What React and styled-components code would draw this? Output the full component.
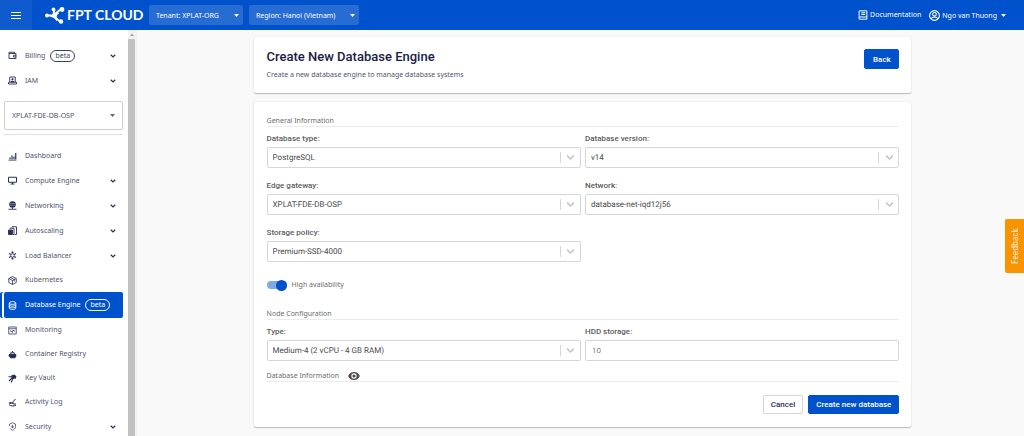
import styled, { createGlobalStyle } from "styled-components";

const GlobalStyle = createGlobalStyle`
  * {
    box-sizing: border-box;
  }
  body {
    margin: 0;
    background-color: #f9f9f9;
    color: #50556f;
    font-family: "Noto Sans", sans-serif;
    font-size: 7px;
    line-height: 12px;
  }
  button,
  input,
  select {
    margin: 0;
    font-family: inherit;
    font-size: inherit;
    color: inherit;
  }
  svg {
    flex-shrink: 0;
  }
`;

const Page = styled.div`
  display: flex;
  flex-direction: column;
  height: 100vh;
  overflow: hidden;
`;

/* top bar */

const TopBar = styled.header`
  display: flex;
  align-items: center;
  flex-shrink: 0;
  height: 30px;
  padding-right: 18px;
  background-color: #0052cc;
  color: #fff;
`;
const MenuButton = styled.button`
  display: flex;
  align-items: center;
  justify-content: center;
  width: 32px;
  height: 30px;
  padding: 0;
  border: 0;
  background-color: #0f5bce;
  color: #fff;
`;
const Logo = styled.a`
  display: flex;
  align-items: center;
  gap: 2px;
  width: 104px;
  margin-left: 13px;
  font-family: Lato, sans-serif;
  font-size: 14px;
  font-weight: 700;
  line-height: 20px;
  color: #fff;
  text-decoration: none;
  white-space: nowrap;
`;
const TopSelectWrap = styled.div`
  display: grid;
  align-items: center;
  margin-right: 6px;
  svg {
    grid-area: 1 / 1;
    justify-self: end;
    margin-right: 4px;
    pointer-events: none;
  }
`;
const TopSelect = styled.select`
  grid-area: 1 / 1;
  width: ${(props) => props.$width};
  height: 20px;
  padding: 0 12px 0 7px;
  border: 0;
  border-radius: 2px;
  background-color: #266cd3;
  color: #fff;
  appearance: none;
`;
const TopLinks = styled.nav`
  display: flex;
  align-items: center;
  gap: 8px;
  margin-left: auto;
`;
const TopLink = styled.a`
  display: flex;
  align-items: center;
  gap: 2px;
  color: #fff;
  text-decoration: none;
  white-space: nowrap;
`;
const UserButton = styled(TopLink).attrs({ as: "button" })`
  padding: 0;
  border: 0;
  background: none;
  svg:last-child {
    margin-left: 2px;
  }
`;

/* sidebar */

const Body = styled.div`
  display: flex;
  flex: 1;
  min-height: 0;
`;
const Sidebar = styled.aside`
  flex: 0 0 128px;
  padding: 13px 5px 0 4px;
  background-color: #fff;
  overflow: hidden;
`;
const NavList = styled.ul`
  margin: 0;
  padding: 0;
  list-style: none;
`;
const NavLink = styled.a`
  display: flex;
  align-items: center;
  height: ${(props) => (props.$expandable ? "25px" : "24px")};
  padding: 0 7px 0 4px;
  color: inherit;
  text-decoration: none;
  white-space: nowrap;
  > svg {
    color: #2b2f55;
  }
  > svg:first-child {
    margin-right: 8px;
  }
  &[aria-current] {
    height: 26px;
    border-radius: 2px;
    background-color: #0052cc;
    color: #fff;
    box-shadow: -2px 0 0 #fff, -4px 0 0 #0052cc;
  }
  &[aria-current] > svg {
    color: #fff;
  }
`;
const ExpandMark = styled.span`
  display: flex;
  margin-left: auto;
  color: #2b2f55;
`;
const Beta = styled.span`
  margin-left: 5px;
  padding: 0 4px;
  border: 1px solid currentColor;
  border-radius: 7px;
  line-height: 10px;
  color: ${(props) => (props.$light ? "#fff" : "#3b3f63")};
`;
const ProjectWrap = styled.div`
  display: grid;
  align-items: center;
  margin: 8px 0 9px;
  padding-bottom: 4px;
  border-bottom: 1px solid #e0e0e0;
  svg {
    grid-area: 1 / 1;
    justify-self: end;
    margin-right: 8px;
    color: #666;
    pointer-events: none;
  }
`;
const ProjectSelect = styled.select`
  grid-area: 1 / 1;
  width: 100%;
  height: 29px;
  padding: 0 16px 0 7px;
  border: 1px solid #cfcfcf;
  border-radius: 2px;
  background-color: #fff;
  appearance: none;
`;
const ScrollTrack = styled.div`
  display: flex;
  flex-direction: column;
  align-items: center;
  flex: 0 0 9px;
  padding-right: 2px;
  background-color: #f1f1f1;
  color: #a3a3a3;
`;
const ScrollArrow = styled.div`
  display: flex;
  align-items: center;
  height: 9px;
`;
const ScrollThumb = styled.div`
  flex: 1;
  width: 7px;
  background-color: #c1c1c1;
`;

/* content */

const Main = styled.main`
  display: flex;
  flex: 1;
  flex-direction: column;
  align-items: center;
  gap: 9px;
  min-width: 0;
  padding: 7px 0 9px 4px;
`;
const Card = styled.section`
  width: 74.5%;
  padding: 12px 12px 13px 13px;
  border-radius: 2px;
  background-color: #fff;
  box-shadow: 0 1px 1px rgba(0, 0, 0, 0.24), 0 0 2px rgba(0, 0, 0, 0.1);
`;
const HeadCard = styled(Card)`
  display: flex;
  align-items: flex-start;
  justify-content: space-between;
  padding-bottom: 12px;
`;
const Title = styled.h1`
  margin: 0 0 4px;
  font-family: Roboto, sans-serif;
  font-size: 13px;
  font-weight: 500;
  line-height: 16px;
  color: #172046;
`;
const Subtitle = styled.p`
  margin: 0;
`;
const Button = styled.button`
  min-width: 35px;
  height: ${(props) => (props.$tall ? "20px" : "19px")};
  padding: 0 7px;
  border: 1px solid ${(props) => (props.$primary ? "#0052cc" : "#d4d4d8")};
  border-radius: 2px;
  background-color: ${(props) => (props.$primary ? "#0052cc" : "#fff")};
  color: ${(props) => (props.$primary ? "#fff" : "#2b3056")};
  font-family: Roboto, sans-serif;
  font-size: 8px;
  font-weight: 500;
`;
const SectionTitle = styled.h2`
  display: flex;
  align-items: center;
  gap: 6px;
  height: 13px;
  margin: 0 0 6px;
  padding-top: 1px;
  border-bottom: 1px solid #ececec;
  font-size: 7px;
  font-weight: 400;
  color: #6c6c6c;
`;
const FieldGrid = styled.div`
  display: grid;
  grid-template-columns: 1fr 1fr;
  gap: 12px 4px;
`;
const Field = styled.div`
  display: flex;
  flex-direction: column;
  gap: 2px;
  font-family: Roboto, sans-serif;
  font-size: 8px;
  color: #4a4a4a;
`;
const Label = styled.label`
  font-weight: 500;
  color: #5c5c5c;
`;
const SelectBox = styled.div`
  display: grid;
  align-items: center;
`;
const Select = styled.select`
  grid-area: 1 / 1;
  width: 100%;
  height: 21px;
  padding: 0 24px 0 5px;
  border: 1px solid #d6d6d6;
  border-radius: 2px;
  background-color: #fff;
  text-rendering: geometricPrecision;
  appearance: none;
`;
const Indicator = styled.span`
  grid-area: 1 / 1;
  justify-self: end;
  display: flex;
  align-items: center;
  justify-content: center;
  width: 21px;
  height: 11px;
  border-left: 1px solid #d6d6d6;
  color: #c4c4c4;
  pointer-events: none;
`;
const Input = styled.input`
  height: 21px;
  padding: 0 6px;
  border: 1px solid #d6d6d6;
  border-radius: 2px;
  background-color: #fff;
  color: #808080;
`;
const SwitchRow = styled.label`
  display: flex;
  align-items: center;
  gap: 5px;
  margin: 17px 0 16px;
  color: #6c6c6c;
`;
const Switch = styled.input`
  display: flex;
  align-items: center;
  justify-content: flex-end;
  width: 20px;
  height: 8px;
  border-radius: 4px;
  background-color: #80a9e6;
  appearance: none;
  &::before {
    content: "";
    width: 11px;
    height: 11px;
    flex-shrink: 0;
    border-radius: 50%;
    background-color: #0052cc;
  }
  &:not(:checked) {
    justify-content: flex-start;
  }
`;
const LastSectionTitle = styled(SectionTitle)`
  gap: 9px;
  margin: 8px 0 13px;
`;
const IconButton = styled.button`
  display: flex;
  padding: 0;
  border: 0;
  background: none;
  color: #4a4a4a;
`;
const Actions = styled.div`
  display: flex;
  justify-content: flex-end;
  gap: 5px;
`;
const Feedback = styled.button`
  position: fixed;
  top: 219px;
  right: 0;
  width: 19px;
  height: 54px;
  padding: 0;
  border: 0;
  border-radius: 0 2px 2px 0;
  background-color: #f79400;
  color: #fff;
  font-size: 8px;
  writing-mode: vertical-rl;
  transform: rotate(180deg);
`;

/* icons */

const Icon = ({ children, size = 9, box = 18 }) => (
  <svg
    width={size}
    height={size}
    viewBox={`0 0 ${box} ${box}`}
    fill="none"
    stroke="currentColor"
    strokeWidth="1.8"
    aria-hidden="true"
  >
    {children}
  </svg>
);

const Caret = () => (
  <svg width="5" height="3" viewBox="0 0 10 6" aria-hidden="true">
    <path d="M0 0h10L5 6z" fill="currentColor" />
  </svg>
);

const Chevron = ({ size = 6, stroke = 2.4 }) => (
  <svg width={size} height={size} viewBox="0 0 12 12" fill="none" aria-hidden="true">
    <path d="M1.500 3.500 6 8l4.500-4.500" stroke="currentColor" strokeWidth={stroke} />
  </svg>
);

const icons = {
  billing: (
    <>
      <path d="M2 5v10h14V5zM2 5V2.500h11V5" />
      <path d="M16 8.500h-5v3.500h5" />
    </>
  ),
  iam: (
    <>
      <path d="M3.500 12V2h11v10M1 12.500h16V16H1z" />
      <circle cx="9" cy="6.500" r="2.200" fill="currentColor" stroke="none" />
      <path d="M5 12.500c0-4 8-4 8 0z" fill="currentColor" stroke="none" />
    </>
  ),
  dashboard: (
    <>
      <path d="M1 16.500h16" strokeWidth="1.400" />
      <path d="M4 15v-4M8 15V7M12 15V9M15.500 15V2" strokeWidth="2.400" />
    </>
  ),
  compute: <path d="M1 2.500h16v10H1zM9 12.500V16M5 16h8" strokeWidth="2" />,
  networking: (
    <>
      <circle cx="9" cy="7" r="6.500" fill="currentColor" stroke="none" />
      <path d="M4 5h10M4 8.500h10" stroke="#fff" strokeWidth="0.700" />
      <path d="M9 13v3M1 16.500h16" />
    </>
  ),
  autoscaling: (
    <>
      <path d="M1 8h8v9H1z" fill="currentColor" />
      <path d="M4 6V4.500h8V17H10M8 3V1.500h9V17h-4" />
    </>
  ),
  balancer: (
    <>
      <circle cx="9" cy="9" r="3.500" />
      <path d="M9 1v4M9 13v4M2 5l3.500 2M12.500 11 16 13M2 13l3.500-2M12.500 7 16 5" strokeWidth="2.200" />
      <path d="M6 2.500h6M6 15.500h6" strokeWidth="1.200" />
    </>
  ),
  kubernetes: (
    <path d="M9 1 16.500 5v8L9 17l-7.500-4V5zM1.500 5 9 9l7.500-4M9 9v8M5 3l7.500 4v4" strokeWidth="1.600" />
  ),
  database: (
    <>
      <ellipse cx="9" cy="4" rx="6.500" ry="2.800" />
      <path d="M2.500 4v10c0 4 13 4 13 0V4M2.500 7.500c0 3.500 13 3.500 13 0M2.500 11c0 3.500 13 3.500 13 0" />
    </>
  ),
  monitoring: <path d="M1.500 2h15v14h-15zM1.500 5.500h15M4 10h3l1.500 3 2-5 1.500 2H14" strokeWidth="1.500" />,
  registry: (
    <>
      <path d="M2 8h14l1 4-3 4.500H5L1 12z" fill="currentColor" stroke="none" />
      <path d="M5.500 8V5.500h7V8M9 5V2" strokeWidth="2" />
    </>
  ),
  vault: (
    <>
      <path d="M7 2.500 13 1l4 4-2 5-3-1-4 1-1-3z" fill="currentColor" stroke="none" />
      <path d="M9 7 2 14M11 8l-5 9M1 5.500h7" strokeWidth="2.200" />
    </>
  ),
  activity: (
    <>
      <path d="M15 2 10 7.500V12h6M10 10H1.500M2 13.500c3 3 10 3 14 1" strokeWidth="2" />
      <circle cx="5" cy="10" r="2" fill="currentColor" stroke="none" />
    </>
  ),
  security: (
    <>
      <path d="M3 8V4l6-2.500L15 4v5c0 4-3 6.500-6 7.500-2-1-4-2-5-4" strokeWidth="1.400" />
      <path d="M9 5.500v4M7 9.500h4L9 12z" strokeWidth="1.400" />
    </>
  ),
};

const LogoMark = () => (
  <svg width="20" height="17" viewBox="0 0 40 34" fill="#fff" stroke="#fff" aria-hidden="true">
    <path d="M4 17h12L31 5M16 17l14 12M16 17 19 6" fill="none" strokeWidth="3.600" />
    <path d="M11 17c6 0 10-4 13-8l4 4c-5 3-7 7-1 12l-4 3c-4-7-8-8-12-8z" stroke="none" />
    <circle cx="4" cy="17" r="4" stroke="none" />
    <circle cx="17" cy="5" r="3.800" stroke="none" />
    <circle cx="34" cy="5" r="4.800" stroke="none" />
    <circle cx="32" cy="29" r="4.500" stroke="none" />
    <circle cx="20" cy="17" r="3.500" stroke="none" />
  </svg>
);

const accountItems = [
  { icon: "billing", label: "Billing", beta: true, expandable: true },
  { icon: "iam", label: "IAM", expandable: true },
];

const serviceItems = [
  { icon: "dashboard", label: "Dashboard" },
  { icon: "compute", label: "Compute Engine", expandable: true },
  { icon: "networking", label: "Networking", expandable: true },
  { icon: "autoscaling", label: "Autoscaling", expandable: true },
  { icon: "balancer", label: "Load Balancer", expandable: true },
  { icon: "kubernetes", label: "Kubernetes" },
  { icon: "database", label: "Database Engine", beta: true, active: true },
  { icon: "monitoring", label: "Monitoring" },
  { icon: "registry", label: "Container Registry" },
  { icon: "vault", label: "Key Vault" },
  { icon: "activity", label: "Activity Log" },
  { icon: "security", label: "Security", expandable: true },
];

const NavItems = ({ items }) => (
  <NavList>
    {items.map((item) => (
      <li key={item.label}>
        <NavLink
          href="#"
          $expandable={item.expandable}
          aria-current={item.active ? "page" : undefined}
        >
          <Icon>{icons[item.icon]}</Icon>
          {item.label}
          {item.beta && <Beta $light={item.active}>beta</Beta>}
          {item.expandable && (
            <ExpandMark>
              <Chevron />
            </ExpandMark>
          )}
        </NavLink>
      </li>
    ))}
  </NavList>
);

const SelectField = ({ id, label, value }) => (
  <Field>
    <Label htmlFor={id}>{label}</Label>
    <SelectBox>
      <Select id={id}>
        <option>{value}</option>
      </Select>
      <Indicator>
        <Chevron size={9} stroke={2} />
      </Indicator>
    </SelectBox>
  </Field>
);

const App = () => {
  return (
    <Page>
      <GlobalStyle />
      <TopBar>
        <MenuButton aria-label="Menu">
          <svg width="10" height="7" viewBox="0 0 10 7" aria-hidden="true">
            <path d="M0 .5h10M0 3.500h10M0 6.500h10" stroke="currentColor" />
          </svg>
        </MenuButton>
        <Logo href="#">
          <LogoMark />
          FPT CLOUD
        </Logo>
        <TopSelectWrap>
          <TopSelect $width="94px" aria-label="Tenant">
            <option>Tenant: XPLAT-ORG</option>
          </TopSelect>
          <Caret />
        </TopSelectWrap>
        <TopSelectWrap>
          <TopSelect $width="110px" aria-label="Region">
            <option>Region: Hanoi (Vietnam)</option>
          </TopSelect>
          <Caret />
        </TopSelectWrap>
        <TopLinks>
          <TopLink href="#">
            <Icon size={10}>
              <path d="M2 1.500h14v15H2zM2 12.500h14M6 5h7M6 8h7" />
            </Icon>
            Documentation
          </TopLink>
          <UserButton>
            <Icon size={11}>
              <circle cx="9" cy="9" r="8" />
              <circle cx="9" cy="7" r="3" />
              <path d="M3.500 14.500c2-4 9-4 11 0" />
            </Icon>
            Ngo van Thuong
            <Caret />
          </UserButton>
        </TopLinks>
      </TopBar>
      <Body>
        <Sidebar>
          <NavItems items={accountItems} />
          <ProjectWrap>
            <ProjectSelect aria-label="Project">
              <option>XPLAT-FDE-DB-OSP</option>
            </ProjectSelect>
            <Caret />
          </ProjectWrap>
          <NavItems items={serviceItems} />
        </Sidebar>
        <ScrollTrack aria-hidden="true">
          <ScrollArrow>
            <svg width="4" height="3" viewBox="0 0 8 6">
              <path d="M0 6h8L4 1z" fill="currentColor" />
            </svg>
          </ScrollArrow>
          <ScrollThumb />
        </ScrollTrack>
        <Main>
          <HeadCard>
            <div>
              <Title>Create New Database Engine</Title>
              <Subtitle>
                Create a new database engine to manage database systems
              </Subtitle>
            </div>
            <Button $primary $tall>
              Back
            </Button>
          </HeadCard>
          <Card>
            <SectionTitle>General Information</SectionTitle>
            <FieldGrid>
              <SelectField id="type" label="Database type:" value="PostgreSQL" />
              <SelectField id="version" label="Database version:" value="v14" />
              <SelectField id="gateway" label="Edge gateway:" value="XPLAT-FDE-DB-OSP" />
              <SelectField id="network" label="Network:" value="database-net-iqd12j56" />
              <SelectField id="policy" label="Storage policy:" value="Premium-SSD-4000" />
            </FieldGrid>
            <SwitchRow>
              <Switch type="checkbox" role="switch" defaultChecked />
              High availability
            </SwitchRow>
            <SectionTitle>Node Configuration</SectionTitle>
            <FieldGrid>
              <SelectField id="node" label="Type:" value="Medium-4 (2 vCPU - 4 GB RAM)" />
              <Field>
                <Label htmlFor="storage">HDD storage:</Label>
                <Input id="storage" defaultValue="10" />
              </Field>
            </FieldGrid>
            <LastSectionTitle>
              Database Information
              <IconButton aria-label="Show database information">
                <svg width="12" height="8" viewBox="0 0 22 15" aria-hidden="true">
                  <path
                    d="M11 0C6 0 1.730 3.110 0 7.500 1.730 11.890 6 15 11 15s9.270-3.110 11-7.500C20.270 3.110 16 0 11 0zm0 12.500a5 5 0 1 1 0-10 5 5 0 0 1 0 10zm0-8a3 3 0 1 0 0 6 3 3 0 0 0 0-6z"
                    fill="currentColor"
                  />
                </svg>
              </IconButton>
            </LastSectionTitle>
            <Actions>
              <Button>Cancel</Button>
              <Button $primary>Create new database</Button>
            </Actions>
          </Card>
        </Main>
      </Body>
      <Feedback>Feedback</Feedback>
    </Page>
  );
};

export default App;
